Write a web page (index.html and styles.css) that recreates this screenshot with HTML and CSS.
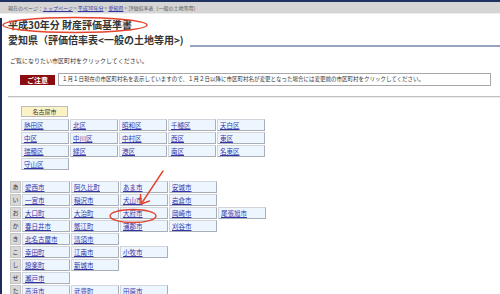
FILE: index.html
```html
<!DOCTYPE html>
<html lang="ja">
<head>
    <meta charset="UTF-8">
    <title>平成30年分 財産評価基準書 愛知県</title>
    <link rel="stylesheet" href="styles.css">
</head>
<body>
    <div class="breadcrumb">
        現在のページ：<a href="#">トップページ</a> &gt; <a href="#">平成30年分</a> &gt; <a href="#">愛知県</a> &gt; 評価倍率表（一般の土地等用）
    </div>
    <div class="page">
        <h1 class="title">平成30年分 財産評価基準書</h1>
        <div class="subtitle">
            <h2>愛知県（評価倍率表&lt;一般の土地等用&gt;)</h2>
            <span class="rule"></span>
        </div>

        <p class="lead">ご覧になりたい市区町村をクリックしてください。</p>

        <div class="notice">
            <div class="notice-label">ご注意</div>
            <div class="notice-text">１月１日現在の市区町村名を表示していますので、１月２日以降に市区町村名が変更となった場合には変更前の市区町村をクリックしてください。</div>
        </div>

        <div class="divider"></div>

        <div class="city-head">名古屋市</div>
        <div class="grid wards">
            <div class="row">
                <a class="cell" href="#">熱田区</a><a class="cell" href="#">北区</a><a class="cell" href="#">昭和区</a><a class="cell" href="#">千種区</a><a class="cell" href="#">天白区</a>
            </div>
            <div class="row">
                <a class="cell" href="#">中区</a><a class="cell" href="#">中川区</a><a class="cell" href="#">中村区</a><a class="cell" href="#">西区</a><a class="cell" href="#">東区</a>
            </div>
            <div class="row">
                <a class="cell" href="#">瑞穂区</a><a class="cell" href="#">緑区</a><a class="cell" href="#">港区</a><a class="cell" href="#">南区</a><a class="cell" href="#">名東区</a>
            </div>
            <div class="row">
                <a class="cell" href="#">守山区</a>
            </div>
        </div>

        <div class="grid kana">
            <div class="row"><span class="kana-label">あ</span><a class="cell" href="#">愛西市</a><a class="cell" href="#">阿久比町</a><a class="cell" href="#">あま市</a><a class="cell" href="#">安城市</a></div>
            <div class="row"><span class="kana-label">い</span><a class="cell" href="#">一宮市</a><a class="cell" href="#">稲沢市</a><a class="cell" href="#">犬山市</a><a class="cell" href="#">岩倉市</a></div>
            <div class="row"><span class="kana-label">お</span><a class="cell" href="#">大口町</a><a class="cell" href="#">大治町</a><a class="cell" href="#">大府市</a><a class="cell" href="#">岡崎市</a><a class="cell" href="#">尾張旭市</a></div>
            <div class="row"><span class="kana-label">か</span><a class="cell" href="#">春日井市</a><a class="cell" href="#">蟹江町</a><a class="cell" href="#">蒲郡市</a><a class="cell" href="#">刈谷市</a></div>
            <div class="row"><span class="kana-label">き</span><a class="cell" href="#">北名古屋市</a><a class="cell" href="#">清須市</a></div>
            <div class="row"><span class="kana-label">こ</span><a class="cell" href="#">幸田町</a><a class="cell" href="#">江南市</a><a class="cell" href="#">小牧市</a></div>
            <div class="row"><span class="kana-label">し</span><a class="cell" href="#">設楽町</a><a class="cell" href="#">新城市</a></div>
            <div class="row"><span class="kana-label">せ</span><a class="cell" href="#">瀬戸市</a></div>
            <div class="row"><span class="kana-label">た</span><a class="cell" href="#">高浜市</a><a class="cell" href="#">武豊町</a><a class="cell" href="#">田原市</a></div>
        </div>
    </div>

    <!-- hand-drawn red marks over the page -->
    <svg class="marks" width="500" height="294" viewBox="0 0 500 294">
        <ellipse cx="75" cy="25" rx="72" ry="7.5" />
        <ellipse cx="133" cy="216" rx="23" ry="6.5" />
        <line x1="163" y1="171" x2="141.5" y2="203.5" />
        <polyline points="140.5,194.5 141,204 149.5,201" />
    </svg>
</body>
</html>
```

FILE: styles.css
```css
body {
    margin: 0;
    font-family: "Noto Sans CJK JP", "Noto Sans", sans-serif;
    color: #333;
    background-color: #fff;
    width: 500px;
    height: 294px;
    overflow: hidden;
    position: relative;
}

a {
    color: #3434a6;
}

.breadcrumb {
    border-top: 2px solid #1f3262;
    border-bottom: 1px solid #ececec;
    background-color: #d5d5d5;
    height: 11px;
    line-height: 11px;
    padding-left: 8px;
    font-size: 5px;
    color: #555;
    white-space: nowrap;
}

.page {
    border-left: 2px solid #1d2c5c;
    padding-left: 6px;
    min-height: 300px;
}

.title {
    margin: 4px 0 0;
    font-size: 10px;
    line-height: 14px;
    color: #333;
}

.subtitle {
    display: flex;
    align-items: flex-end;
}

.subtitle h2 {
    margin: 0;
    font-size: 10px;
    line-height: 15px;
    color: #333;
    white-space: nowrap;
}

.subtitle .rule {
    flex: 1;
    border-bottom: 2px solid #98a3bf;
    margin-left: 6px;
}

.lead {
    margin: 9px 0 0 2px;
    font-size: 6px;
    line-height: 10px;
}

.notice {
    display: flex;
    align-items: center;
    gap: 3px;
    margin: 7px 0 0 12px;
    width: 471px;
}

.notice-label {
    width: 35px;
    height: 10px;
    line-height: 10px;
    background-color: #8b0c10;
    color: #fff;
    font-size: 7px;
    font-weight: bold;
    text-align: center;
}

.notice-text {
    flex: 1;
    height: 11px;
    line-height: 11px;
    border: 1px solid #a8a8a8;
    padding-left: 3px;
    font-size: 5.5px;
    white-space: nowrap;
}

.divider {
    margin-top: 10px;
    border-top: 1px solid #c0c0c0;
    border-bottom: 1px solid #ebebeb;
}

.city-head {
    margin: 8px 0 0 13px;
    width: 45px;
    height: 9px;
    line-height: 9px;
    border: 1px solid #bdbdbd;
    background-color: #fbf3c6;
    font-size: 6px;
    text-align: center;
    color: #333;
}

.grid {
    display: flex;
    flex-direction: column;
    gap: 1px;
}

.wards {
    margin: 2px 0 0 13px;
}

.kana {
    margin: 11px 0 0 2px;
}

.row {
    display: flex;
    gap: 1px;
}

.cell {
    display: block;
    width: 44px;
    height: 10px;
    line-height: 10px;
    padding-left: 2px;
    box-sizing: content-box;
    border: 1px solid;
    border-color: #d2d6dc #a9afb8 #a9afb8 #d2d6dc;
    background-color: #edf5ff;
    font-size: 6.5px;
    white-space: nowrap;
    overflow: hidden;
}

.kana-label {
    display: block;
    width: 9px;
    height: 10px;
    line-height: 10px;
    border: 1px solid #c4c4c4;
    background-color: #d9d9d9;
    font-size: 6px;
    text-align: center;
    color: #333;
}

.marks {
    position: absolute;
    top: 0;
    left: 0;
    pointer-events: none;
    fill: none;
    stroke: #e4432c;
    stroke-width: 1.4;
    stroke-linecap: round;
    stroke-linejoin: round;
}
```
